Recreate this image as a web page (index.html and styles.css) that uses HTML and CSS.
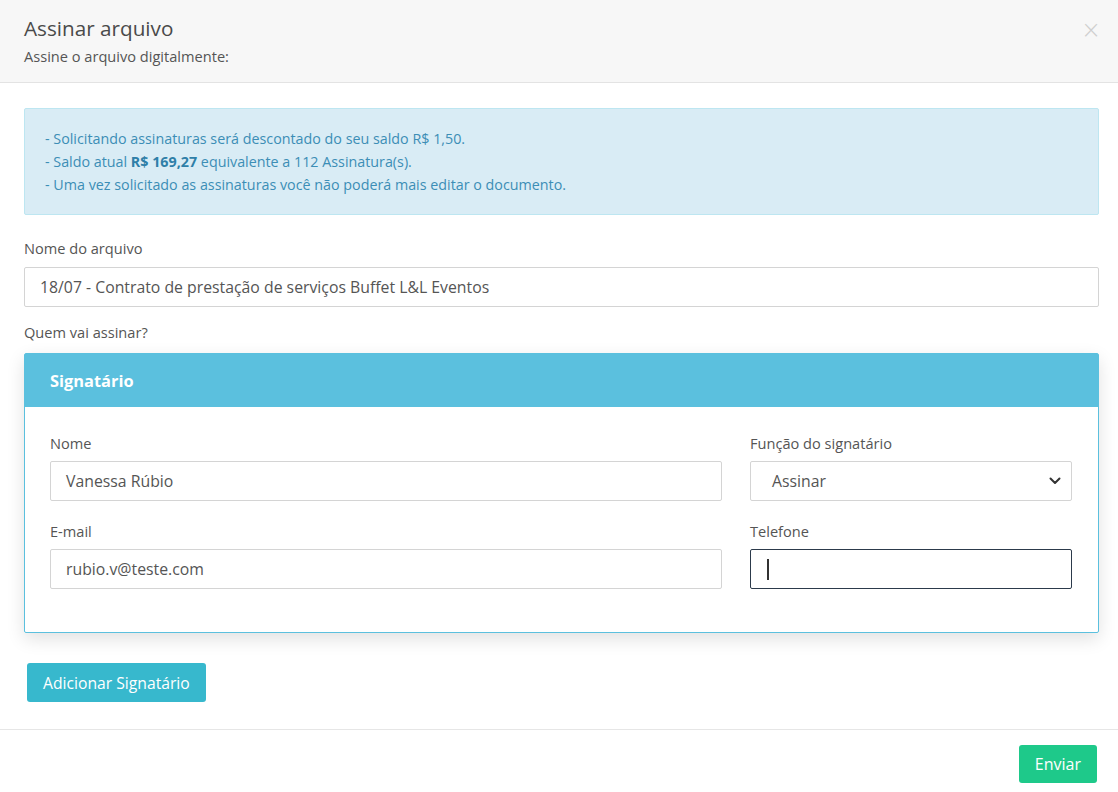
FILE: index.html
```html
<!DOCTYPE html>
<html lang="pt-BR">
<head>
<meta charset="utf-8">
<title>Assinar arquivo</title>
<link rel="stylesheet" href="styles.css">
</head>
<body>
<div class="modal">
  <div class="modal-header">
    <div class="titles">
      <h1 class="title">Assinar arquivo</h1>
      <p class="subtitle">Assine o arquivo digitalmente:</p>
    </div>
    <span class="close">&times;</span>
  </div>
  <div class="modal-body">
    <div class="alert">
      <p>- Solicitando assinaturas será descontado do seu saldo R$ 1,50.</p>
      <p>- Saldo atual <b>R$ 169,27</b> equivalente a 112 Assinatura(s).</p>
      <p>- Uma vez solicitado as assinaturas você não poderá mais editar o documento.</p>
    </div>
    <label class="label">Nome do arquivo</label>
    <div class="input">18/07 - Contrato de prestação de serviços Buffet L&amp;L Eventos</div>
    <p class="label question">Quem vai assinar?</p>
    <div class="card">
      <div class="card-header">Signatário</div>
      <div class="card-body">
        <div class="field">
          <label class="label">Nome</label>
          <div class="input">Vanessa Rúbio</div>
        </div>
        <div class="field">
          <label class="label">Função do signatário</label>
          <div class="input select"><span class="sel-text">Assinar</span>
            <svg class="chev" width="12" height="8" viewBox="0 0 12 8"><path d="M1.5 1.5 L6 6 L10.5 1.5" fill="none" stroke="#333" stroke-width="2" stroke-linecap="round" stroke-linejoin="round"/></svg>
          </div>
        </div>
        <div class="field">
          <label class="label">E-mail</label>
          <div class="input">rubio.v@teste.com</div>
        </div>
        <div class="field">
          <label class="label">Telefone</label>
          <div class="input focused"><span class="caret"></span></div>
        </div>
      </div>
    </div>
    <button class="btn btn-info">Adicionar Signatário</button>
  </div>
  <div class="modal-footer">
    <button class="btn btn-success">Enviar</button>
  </div>
</div>
</body>
</html>
```
FILE: styles.css
```css
* { box-sizing: border-box; }
html, body { margin: 0; padding: 0; background: #fff; }
body {
  font-family: "Open Sans", "Noto Sans", "DejaVu Sans", sans-serif;
  color: #555;
  width: 1118px;
  height: 792px;
  overflow: hidden;
}
.modal { display: flex; flex-direction: column; }
.modal-header {
  background: #f7f7f7;
  border-bottom: 1px solid #e3e3e3;
  height: 83px;
  padding: 14px 17px 0 24px;
  display: flex;
  justify-content: space-between;
  align-items: flex-start;
}
.title {
  margin: 0;
  font-size: 20.7px;
  font-weight: 400;
  color: #4a4a4a;
  line-height: 28px;
}
.subtitle {
  margin: 5px 0 0;
  font-size: 14.6px;
  color: #555;
  line-height: 18px;
}
.close {
  font-size: 24px;
  color: #cfcfcf;
  line-height: 24px;
  margin-top: 4px;
  font-family: "DejaVu Sans", sans-serif;
  font-weight: 300;
}
.modal-body {
  padding: 25px 19px 27px 24px;
  border-bottom: 1px solid #e6e6e6;
}
.alert {
  background: #d9ecf5;
  border: 1px solid #bde6f1;
  border-radius: 2px;
  color: #3c8eb6;
  padding: 18px 20px 18px;
  font-size: 14.3px;
  line-height: 23px;
  margin-bottom: 24px;
}
.alert p { margin: 0; }
.alert b { color: #2f7fa8; }
.label {
  display: block;
  font-size: 14.6px;
  color: #555;
  line-height: 18px;
  margin: 0 0 10px;
}
.question { margin: 16px 0 12px; }
.input {
  height: 40px;
  border: 1px solid #d4d4d4;
  border-radius: 2px;
  background: #fff;
  padding: 0 15px;
  font-size: 15.8px;
  color: #555;
  display: flex;
  align-items: center;
}
.card-body .label { margin-bottom: 9px; }
.card {
  border: 1px solid #5bc0de;
  border-radius: 2px;
  box-shadow: 0 6px 18px rgba(0,0,0,0.12);
  margin-bottom: 30px;
}
.card-header {
  background: #5bc0de;
  color: #fff;
  font-weight: 700;
  font-size: 16.4px;
  height: 53px;
  padding: 0 25px;
  display: flex;
  align-items: center;
}
.card-body {
  padding: 27px 25px 43px;
  display: grid;
  grid-template-columns: 672px 322px;
  column-gap: 28px;
  row-gap: 21px;
}
.select {
  justify-content: space-between;
  padding: 0 10px 0 21px;
  color: #555;
}
.chev { display: block; }
.focused {
  border-color: #2c3a4b;
  position: relative;
}
.caret {
  width: 2px;
  height: 21px;
  background: #333;
  margin-left: 1px;
}
.btn {
  font-family: inherit;
  border: none;
  border-radius: 3px;
  color: #fff;
  font-size: 15.7px;
  cursor: pointer;
}
.btn-info {
  background: #37b8cd;
  height: 39px;
  padding: 0 16px;
  margin-left: 3px;
}
.modal-footer {
  display: flex;
  justify-content: flex-end;
  padding: 15px 21px 0;
}
.btn-success {
  background: #1ec98a;
  height: 38px;
  padding: 0 16px;
  font-size: 16px;
}
```
